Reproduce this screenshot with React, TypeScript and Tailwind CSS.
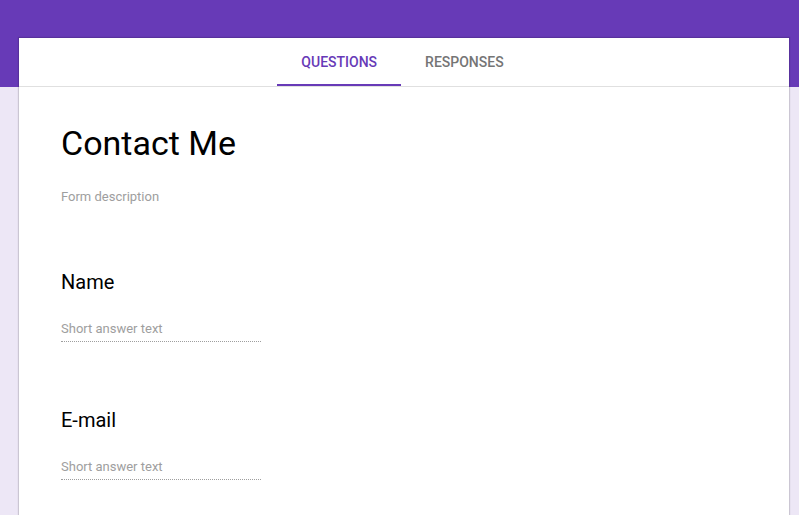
import React from 'react';

const tabs = [
  { label: 'Questions', active: true },
  { label: 'Responses', active: false },
];

const questions = ['Name', 'E-mail'];

const ShortAnswer: React.FC<{ title: string; first?: boolean }> = ({ title, first }) => (
  <div className={first ? 'mt-[61px]' : 'mt-[64px]'}>
    <div className="text-[20px] leading-[28px] text-black">{title}</div>
    <div className="mt-[23px] w-[200px] pb-[2px] border-b border-dotted border-[#9e9e9e] text-[13px] leading-[20px] text-[#9e9e9e]">
      Short answer text
    </div>
  </div>
);

export default function App() {
  return (
    <div className="h-[515px] w-full overflow-hidden bg-[#ede7f6] font-['Roboto',sans-serif]">
      <div className="h-[87px] bg-[#673ab7]"></div>

      <div className="-mt-[49px] ml-[19px] w-[770px] h-[600px] bg-white shadow-[0_0_1px_1px_rgba(0,0,0,0.14)]">
        <div className="h-[49px] pr-[3px] flex justify-center border-b border-[#e0e0e0]">
          {tabs.map((t) => (
            <div
              key={t.label}
              className={
                'px-6 pt-[2px] flex items-center text-[14px] font-medium uppercase border-b-2 ' +
                (t.active ? 'text-[#673ab7] border-[#673ab7]' : 'text-[#757575] border-transparent')
              }
            >
              {t.label}
            </div>
          ))}
        </div>

        <div className="pl-[42px] pt-[36px]">
          <h1 className="text-[34px] leading-[40px] text-black">Contact Me</h1>
          <p className="mt-[24px] text-[13px] leading-[20px] text-[#9e9e9e]">Form description</p>

          {questions.map((q, i) => (
            <ShortAnswer key={q} title={q} first={i === 0} />
          ))}
        </div>
      </div>
    </div>
  );
}
